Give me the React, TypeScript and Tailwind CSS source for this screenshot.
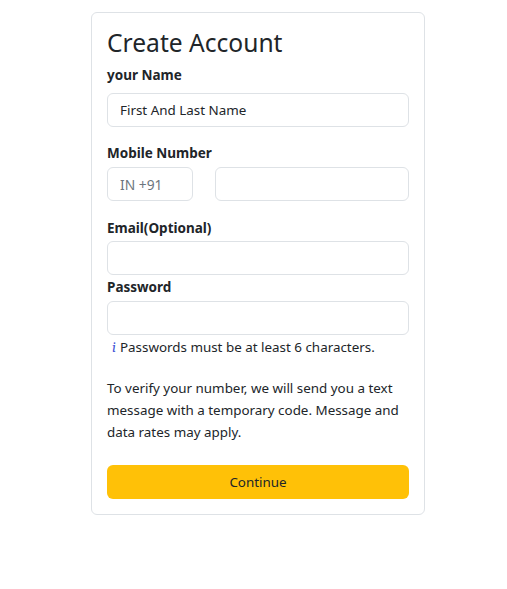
const labelCls = 'block text-[13.5px] font-bold text-[#212529] leading-[20px]';
const inputCls =
  'block h-[34px] rounded-[6px] border border-[#dee2e6] bg-white px-3 text-[13.4px] text-[#212529] outline-none';

export default function App() {
  return (
    <div
      className="min-h-[589px] bg-white pt-3"
      style={{ fontFamily: '"Noto Sans", "Open Sans", sans-serif' }}
    >
      <div className="ml-[91px] w-[334px] rounded-[6px] border border-[#dee2e6] px-[15px] pt-[14px] pb-[15px]">
        <h3 className="text-[24.6px] leading-[32px] font-normal text-[#212529] mb-[6px]">Create Account</h3>

        <label className={labelCls}>your Name</label>
        <input className={`${inputCls} w-full mt-[8px]`} defaultValue="First And Last Name" />

        <label className={`${labelCls} mt-[16px]`}>Mobile Number</label>
        <div className="mt-[4px] flex gap-[22px]">
          <input className={`${inputCls} w-[86px] shrink-0 !text-[13.8px] !text-[#6c757d]`} defaultValue="IN +91" />
          <input className={`${inputCls} min-w-0 flex-1`} />
        </div>

        <label className={`${labelCls} mt-[17px]`}>Email(Optional)</label>
        <input className={`${inputCls} w-full mt-[3px]`} />

        <label className={`${labelCls} mt-[2px]`}>Password</label>
        <input className={`${inputCls} w-full mt-[4px]`} />
        <p className="mt-[2px] pl-[5px] text-[13.4px] leading-[20px] text-[#212529]">
          <i className="font-serif text-[15px] text-[#3d52d5] mr-[4px]">i</i>
          Passwords must be at least 6 characters.
        </p>

        <p className="mt-[20px] text-[13.4px] leading-[22px] text-[#212529]">
          To verify your number, we will send you a text message with a temporary code. Message and
          data rates may apply.
        </p>

        <button className="mt-[22px] block w-full h-[34px] rounded-[6px] bg-[#ffc107] text-[13.4px] text-[#212529]">
          Continue
        </button>
      </div>
    </div>
  );
}
